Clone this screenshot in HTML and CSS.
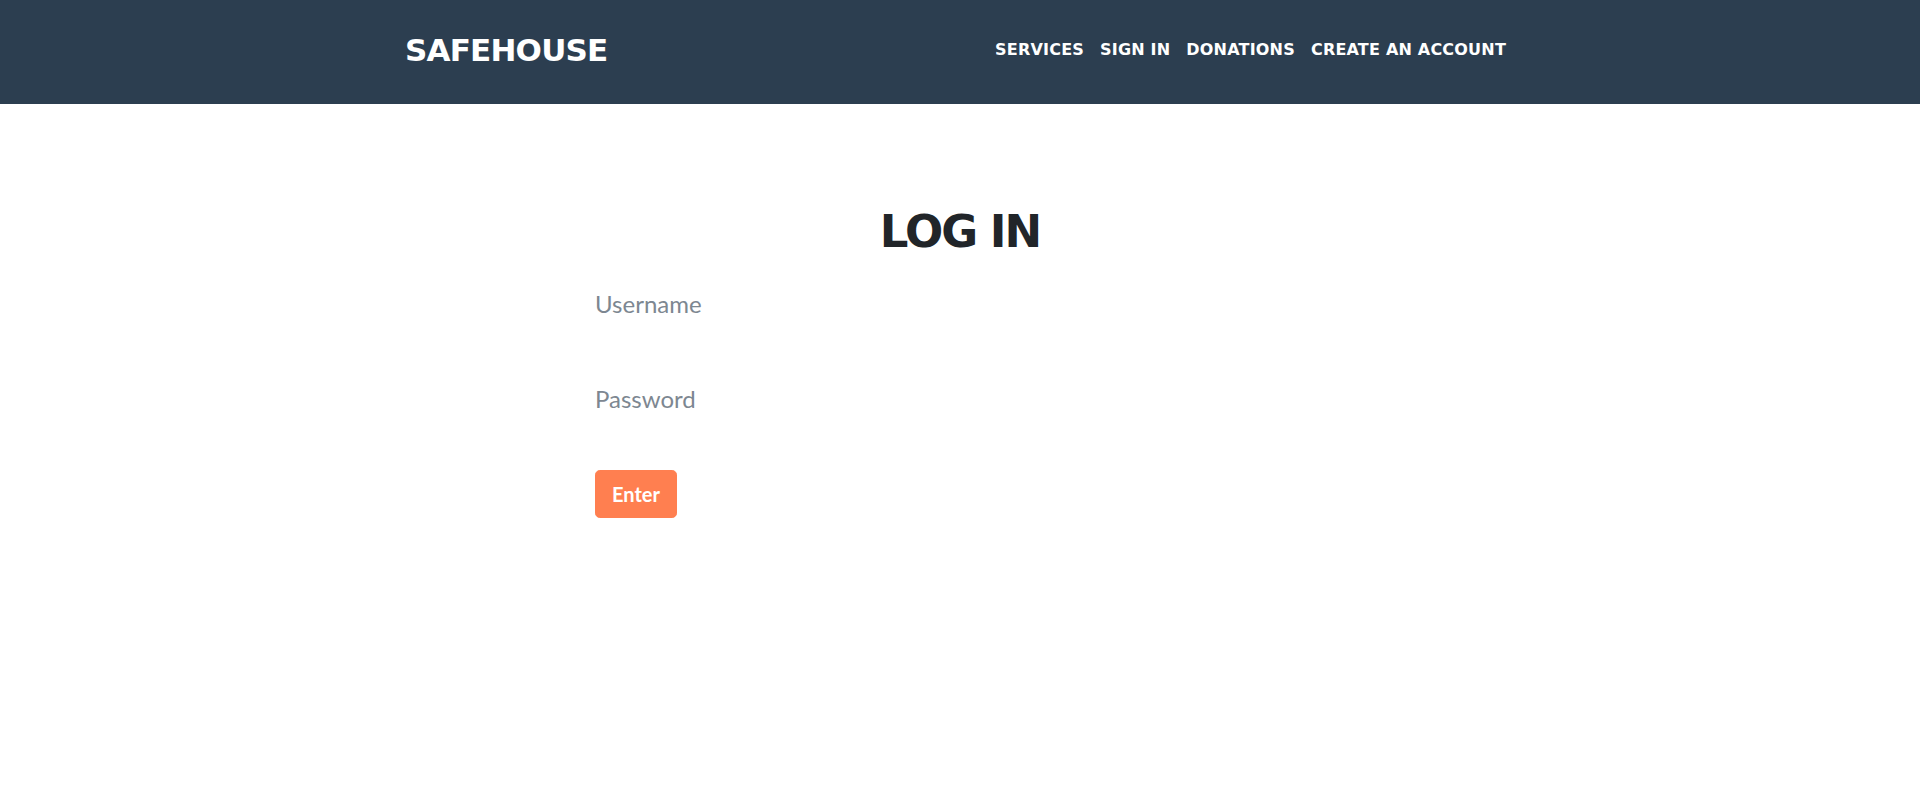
FILE: index.html
```html
<!DOCTYPE html>
<html lang="en">
<head>
<meta charset="utf-8">
<title>Safehouse - Log In</title>
<link rel="stylesheet" href="styles.css">
</head>
<body>
<header class="topbar">
  <div class="container topbar-inner">
    <a class="brand" href="#">SAFEHOUSE</a>
    <nav class="nav">
      <a class="nav-link" href="#">Services</a>
      <a class="nav-link" href="#">Sign In</a>
      <a class="nav-link" href="#">Donations</a>
      <a class="nav-link" href="#">Create an Account</a>
    </nav>
  </div>
</header>
<main class="main">
  <h2 class="title">LOG IN</h2>
  <form class="login-form">
    <input class="field" type="text" placeholder="Username">
    <input class="field" type="password" placeholder="Password">
    <button class="btn" type="button">Enter</button>
  </form>
</main>
</body>
</html>
```
FILE: styles.css
```css
* { box-sizing: border-box; }
html, body { margin: 0; padding: 0; }
body {
  font-family: Lato, "Noto Sans", sans-serif;
  background: #fff;
  color: #212529;
}
.container {
  width: 1140px;
  margin: 0 auto;
  padding: 0 15px;
}
.topbar {
  background: #2c3e50;
  height: 104px;
}
.topbar-inner {
  height: 100%;
  display: flex;
  align-items: center;
  justify-content: space-between;
  padding-right: 24px;
}
.brand {
  font-family: "DejaVu Sans", sans-serif;
  font-weight: 700;
  font-size: 31px;
  letter-spacing: -0.8px;
  color: #fff;
  text-decoration: none;
  margin-top: -4px;
}
.nav {
  display: flex;
  gap: 16px;
  margin-top: -5px;
}
.nav-link {
  font-family: "DejaVu Sans", sans-serif;
  font-weight: 700;
  font-size: 16px;
  letter-spacing: 0.2px;
  text-transform: uppercase;
  color: #fff;
  text-decoration: none;
}
.main {
  width: 760px;
  margin: 0 auto;
  padding: 101px 15px 0;
}
.title {
  margin: 0;
  text-align: center;
  font-family: "DejaVu Sans", sans-serif;
  font-weight: 700;
  font-size: 45px;
  line-height: 54px;
  letter-spacing: -2px;
  color: #212529;
}
.login-form {
  display: flex;
  flex-direction: column;
  align-items: flex-start;
  padding-top: 30px;
}
.field {
  display: block;
  width: 100%;
  height: 29px;
  border: 0;
  padding: 0;
  margin: 0 0 66px;
  font-family: Lato, sans-serif;
  font-size: 24px;
  line-height: 29px;
  color: #495057;
  outline: none;
  background: transparent;
}
.field::placeholder { color: #7d8791; }
.field + .field { margin-bottom: 57px; }
.btn {
  font-family: Lato, sans-serif;
  font-weight: 700;
  font-size: 20px;
  line-height: 30px;
  padding: 8px 16px;
  border: 1px solid #ff7f50;
  background: #ff7f50;
  color: #fff;
  border-radius: 4.8px;
  cursor: pointer;
}
```
